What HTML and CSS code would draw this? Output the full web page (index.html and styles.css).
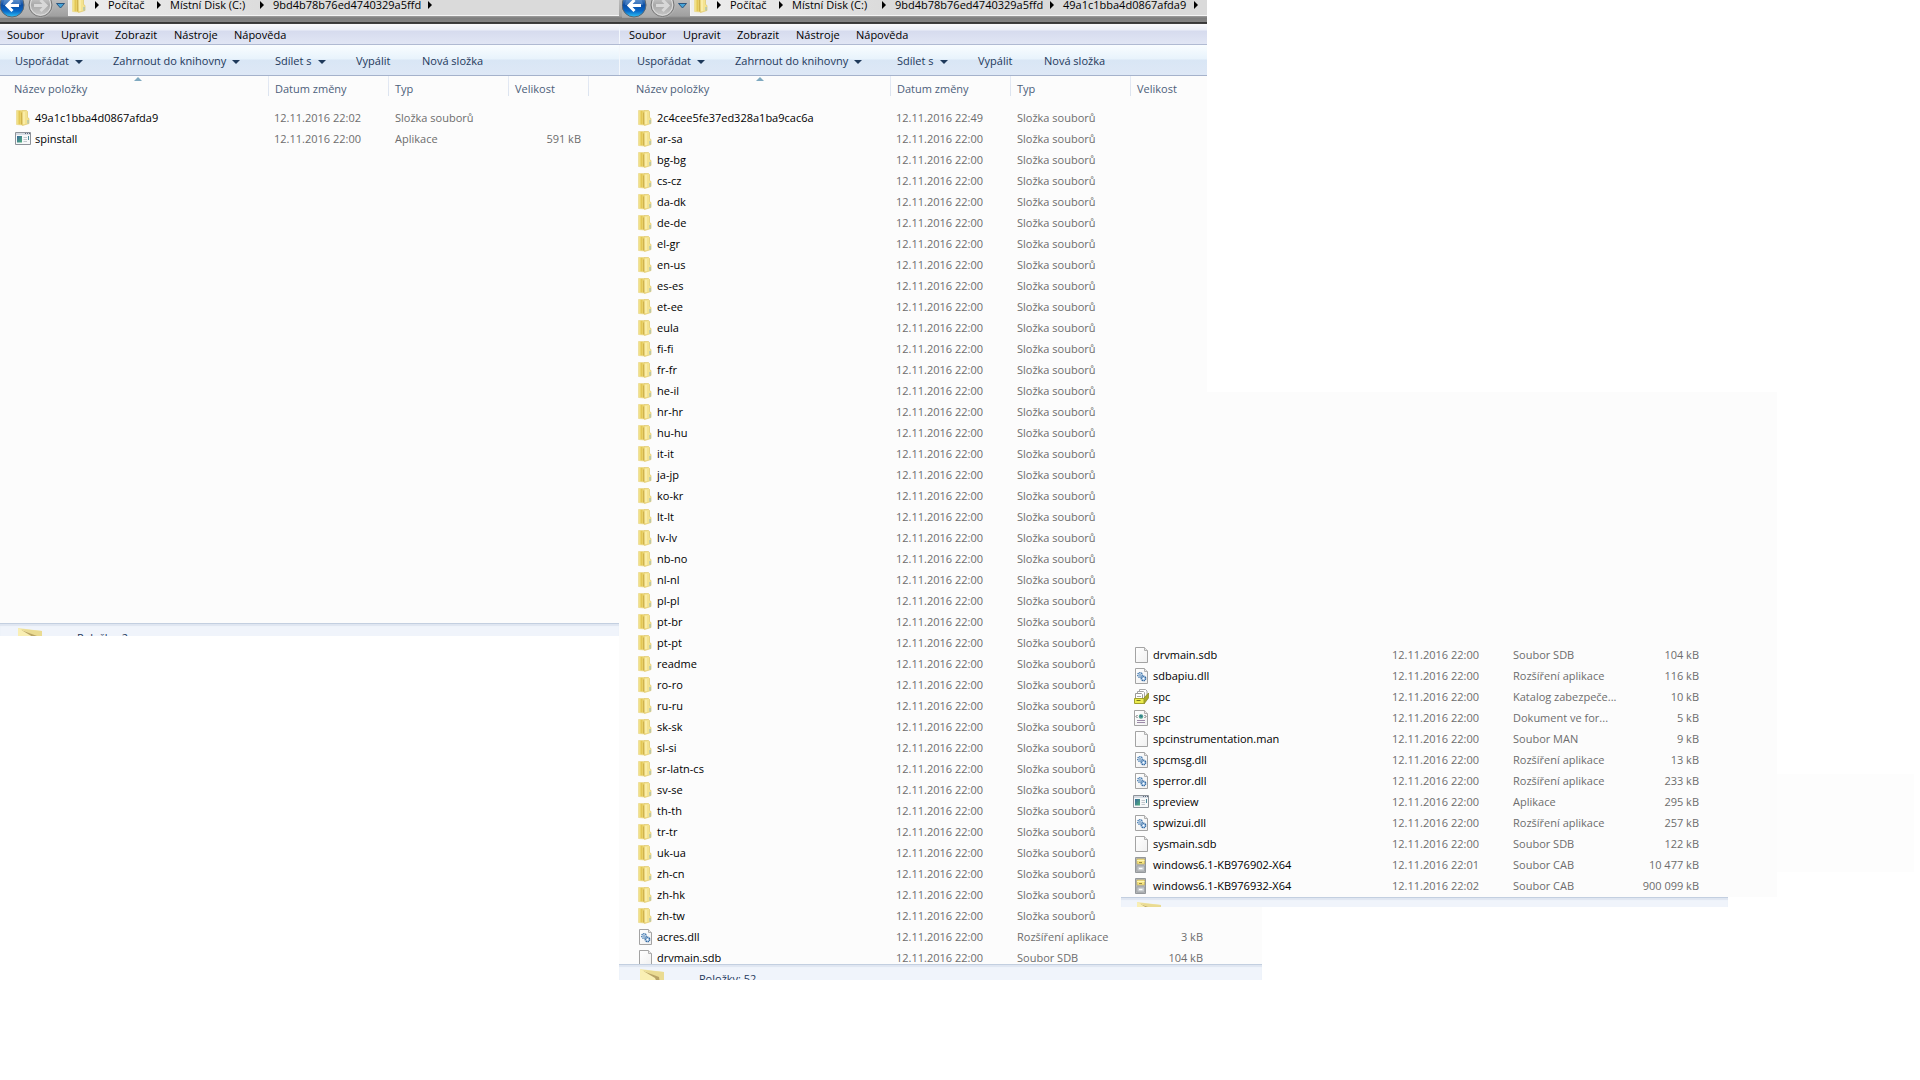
FILE: index.html
```html
<!DOCTYPE html>
<html lang="cs">
<head>
<meta charset="utf-8">
<title>Místní Disk (C:)</title>
<link rel="stylesheet" href="styles.css">
</head>
<body>
<svg class="sprites" aria-hidden="true">
  <defs>
    <linearGradient id="gold" x1="0" x2="1" y1="0" y2="0"><stop offset="0" stop-color="#f8eda0"/><stop offset=".5" stop-color="#e3c755"/><stop offset="1" stop-color="#f3e38d"/></linearGradient>
    <linearGradient id="blue" x1="0" x2="0" y1="0" y2="1"><stop offset="0" stop-color="#8fb8e2"/><stop offset=".5" stop-color="#0c4da3"/><stop offset=".75" stop-color="#0868c8"/><stop offset="1" stop-color="#2fc3f5"/></linearGradient>
    <linearGradient id="steel" x1="0" x2="0" y1="0" y2="1"><stop offset="0" stop-color="#d6d6d6"/><stop offset=".5" stop-color="#a9a9a9"/><stop offset="1" stop-color="#c8c8c8"/></linearGradient>
    <linearGradient id="paper" x1="0" x2="1" y1="0" y2="1"><stop offset="0" stop-color="#fff"/><stop offset="1" stop-color="#f0f0f0"/></linearGradient>
    <linearGradient id="teal" x1="0" x2="1" y1="0" y2="1"><stop offset="0" stop-color="#3a6a9a"/><stop offset="1" stop-color="#4fae7d"/></linearGradient>
  </defs>
  <symbol id="folder" viewBox="0 0 16 16">
    <path d="M1.5 .5h5l1 1V15l-6-.5z" fill="url(#gold)" stroke="#e9d78a" stroke-width=".7"/>
    <path d="M7 .5h4.500l1 1v6l1.500 1v5L7.500 15.500z" fill="#f4e38f" stroke="#dfc76a" stroke-width=".7"/>
    <path d="M6.500 2.500v12" stroke="#d0b24c"/><path d="M9 2v12" stroke="#fff6c0"/><path d="M13 10v3.500" stroke="#8fb7c4"/>
  </symbol>
  <symbol id="page" viewBox="0 0 16 16">
    <path d="M2.500.5h9l3 3v12h-12z" fill="url(#paper)" stroke="#a3a3a3"/><path d="M11.500.5v3h3" fill="#e8e8e8" stroke="#b0b0b0"/>
  </symbol>
  <symbol id="dll" viewBox="0 0 16 16">
    <use href="#page"/>
    <circle cx="7" cy="7" r="2.300" fill="#d7e8f7" stroke="#467aae" stroke-width="1.400" stroke-dasharray="1.200 .6"/><circle cx="7" cy="7" r=".7" fill="#2d5c91"/>
    <circle cx="10.500" cy="10.500" r="2.200" fill="#b9d4ee" stroke="#2f66a0" stroke-width="1.400" stroke-dasharray="1.200 .6"/><circle cx="10.500" cy="10.500" r=".7" fill="#fff"/>
  </symbol>
  <symbol id="app" viewBox="0 0 16 16">
    <path d="M.5 1.500h15v12H.5z" fill="#f7f8f9" stroke="#8d9299"/><path d="M1 2h14v2H1z" fill="#d7dce3"/><path d="M10 2.500h1m1 0h1m1 0h1" stroke="#58677c"/>
    <path d="M2 5h5v6.500H2z" fill="url(#teal)"/><path d="M8.500 6.500H12M8.500 8.500H12M8.500 10.500H12" stroke="#c2c7cd"/><path d="M13.500 5v4" stroke="#4a8a9a"/>
  </symbol>
  <symbol id="catalog" viewBox="0 0 16 16">
    <path d="M6.500.5h6l1.500 1.500v7h-7.500z" fill="#fff" stroke="#a7a7a7"/><path d="M4.500 2.500h6l1 1v7h-7z" fill="#fff" stroke="#a7a7a7"/><path d="M2.500 4.500h6l1 1v6h-7z" fill="#fff" stroke="#999"/>
    <path d="M4 7.500h4" stroke="#aaa"/><path d="M10.500 9.500L15.500 4v5l-4.500 6z" fill="#a9a927" stroke="#85851d" stroke-width=".7"/>
    <path d="M1.500 9.500h9.500v5H1.500z" fill="#ecec4f" stroke="#a0a02b"/><path d="M3.500 11.500h4" stroke="#77771d"/>
  </symbol>
  <symbol id="xml" viewBox="0 0 16 16">
    <path d="M1.500.5h10l3 3v12h-13z" fill="url(#paper)" stroke="#a3a3a3"/><path d="M11.500.5v3h3" fill="#e8e8e8" stroke="#b0b0b0"/>
    <circle cx="8" cy="6.500" r="2.200" fill="#4aa08e"/><path d="M7 5.500l2 1" stroke="#245f91"/><path d="M4.500 5L3 6.500 4.500 8M11.500 5L13 6.500 11.500 8" fill="none" stroke="#666"/>
    <path d="M4 10.500h8M4 12.500h8" stroke="#9c8aa9"/>
  </symbol>
  <symbol id="cabinet" viewBox="0 0 16 16">
    <path d="M2.500.5h10v15h-10z" fill="#b4b7b9" stroke="#94989b"/><path d="M4 2h7.500v5H4z" fill="#f6e582" stroke="#c4ad50" stroke-width=".6"/><path d="M4 3.500h7.500" stroke="#fff7b5"/><path d="M6 5.500h3" stroke="#9a8b45"/>
    <path d="M4 9h7.500v5H4z" fill="#c6cacc" stroke="#95999c" stroke-width=".6"/><path d="M6 11.500h3.500" stroke="#fff" stroke-width="1.400"/>
  </symbol>
  <symbol id="nav" viewBox="0 0 68 23">
    <rect x="-14" y="-10" width="68" height="28" rx="14" fill="#b9b9b9" opacity=".5"/>
    <circle cx="12" cy="5" r="12" fill="url(#blue)" stroke="#5b6670"/><path d="M3 5a9 9 0 0 1 18 0" fill="#7fb0e2" opacity=".35"/>
    <path d="M19 5.500H8M12.500 0L7 5.500 12.500 11" fill="none" stroke="#fff" stroke-width="3"/>
    <circle cx="40.500" cy="5" r="11.500" fill="url(#steel)" stroke="#777"/><circle cx="40.500" cy="5" r="10.200" fill="none" stroke="#dedede"/>
    <path d="M34 5.500h11M40.500 0l5.500 5.500-5.500 5.500" fill="none" stroke="#d8d8d8" stroke-width="3"/>
    <path d="M56.500 3.500h8l-4 4.500z" fill="#45a5d9" stroke="#2b5680"/>
  </symbol>
  <symbol id="bigfolder" viewBox="0 0 28 16">
    <path d="M2 0l24 3v13H2z" fill="#f3e8a8"/><path d="M5 1l16 8v7h5V3z" fill="#eadb92"/><path d="M5 2l16 6 1 8z" fill="#b9a466"/><path d="M2 0l15 9 3 7H2z" fill="#f9efb4"/>
  </symbol>
</svg>

<main class="desktop">
  <section class="window first">
    <header class="chrome">
      <div class="titlebar">
        <svg class="nav"><use href="#nav"/></svg>
        <nav class="address"><svg class="icon"><use href="#folder"/></svg>
          <a class="crumb pc" href="#">Počítač</a><a class="crumb disk" href="#">Místní Disk (C:)</a><a class="crumb dir" href="#">9bd4b78b76ed4740329a5ffd</a><i class="next"></i></nav>
      </div>
      <div class="menubar"><button>Soubor</button><button>Upravit</button><button>Zobrazit</button><button>Nástroje</button><button>Nápověda</button></div>
      <div class="toolbar"><button class="drop">Uspořádat</button><button class="drop">Zahrnout do knihovny</button><button class="drop">Sdílet s</button><button>Vypálit</button><button>Nová složka</button></div>
    </header>
    <div class="list">
      <table><colgroup><col class="c-name"><col class="c-date"><col class="c-type"><col class="c-size"></colgroup>
        <thead><tr><th class="sorted">Název položky</th><th>Datum změny</th><th>Typ</th><th>Velikost</th></tr></thead>
        <tbody id="files-first"></tbody></table>
    </div>
    <footer class="status"><svg class="thumb"><use href="#bigfolder"/></svg><span>Položky: 2</span></footer>
  </section>

  <section class="window second">
    <header class="chrome">
      <div class="titlebar">
        <svg class="nav"><use href="#nav"/></svg>
        <nav class="address"><svg class="icon"><use href="#folder"/></svg>
          <a class="crumb pc" href="#">Počítač</a><a class="crumb disk" href="#">Místní Disk (C:)</a><a class="crumb dir" href="#">9bd4b78b76ed4740329a5ffd</a><a class="crumb sub" href="#">49a1c1bba4d0867afda9</a><i class="next"></i></nav>
      </div>
      <div class="menubar"><button>Soubor</button><button>Upravit</button><button>Zobrazit</button><button>Nástroje</button><button>Nápověda</button></div>
      <div class="toolbar"><button class="drop">Uspořádat</button><button class="drop">Zahrnout do knihovny</button><button class="drop">Sdílet s</button><button>Vypálit</button><button>Nová složka</button></div>
    </header>
    <div class="list">
      <table><colgroup><col class="c-name"><col class="c-date"><col class="c-type"><col class="c-size"></colgroup>
        <thead><tr><th class="sorted">Název položky</th><th>Datum změny</th><th>Typ</th><th>Velikost</th></tr></thead>
        <tbody id="files-second"></tbody></table>
    </div>
    <footer class="status"><svg class="thumb"><use href="#bigfolder"/></svg><span>Položky: 52</span></footer>
  </section>

  <section class="window third">
    <div class="list">
      <table><colgroup><col class="c-name"><col class="c-date"><col class="c-type"><col class="c-size"></colgroup>
        <tbody id="files-third"></tbody></table>
    </div>
    <footer class="status"><svg class="thumb"><use href="#bigfolder"/></svg></footer>
  </section>
  <div class="margin-pane"></div>
</main>
<script src="script.js"></script>
</body>
</html>
```
FILE: styles.css
```css
* { box-sizing: border-box; }

body {
  margin: 0;
  background: #fff;
  font: 11px/21px "Open Sans", "Noto Sans", sans-serif;
  color: #000;
}

button { border: 0; padding: 0; background: none; font: inherit; color: inherit; text-align: left; white-space: nowrap; }
a { color: inherit; text-decoration: none; }
.sprites { position: absolute; width: 0; height: 0; }

.desktop {
  display: grid;
  grid-template-columns: 619fr 499fr 144fr 515fr 137fr 6fr;
  grid-template-rows: auto;
  align-items: start;
  overflow: hidden;
}
.window { grid-row: 1; min-width: 0; display: flex; flex-direction: column; }
.first { grid-column: 1; }
.second {
  grid-column: 2 / 4;
  background: linear-gradient(#fff, #fff) top right / 55px 392px no-repeat #fcfcfc;
}
.third { grid-column: 3 / 5; margin-top: 392px; z-index: 1; }
.margin-pane { grid-row: 1; grid-column: 5; height: 98px; margin-top: 774px; background: #fdfdfd; }

/* Window frame */
.second .chrome { margin-right: 55px; }
.second .menubar { padding-left: 10px; }
.second .toolbar { padding-left: 18px; }
.second .menubar, .second .toolbar { box-shadow: inset 1px 0 #f3f7fc; }
.second .titlebar { padding-left: 3px; }
.titlebar {
  display: flex;
  height: 24px;
  overflow: hidden;
  background: linear-gradient(#bcbcbc, #a0a0a0 16px, #7d7d7d 18px, #858585 22px, #333 22px, #444 24px);
}
.nav { flex: none; width: 68px; height: 23px; }
.address {
  flex: 1;
  display: flex;
  align-items: center;
  min-width: 0;
  height: 16px;
  padding: 0 0 6px 2px;
  border-left: 1px solid #f4f4f4;
  border-bottom: 1px solid #f4f4f4;
  background: linear-gradient(90deg, #eee, #dadada 40%);
}
.icon { flex: none; width: 16px; height: 16px; }
.address .icon { margin-right: 8px; }
.crumb { display: flex; align-items: center; flex: none; line-height: 16px; }
.crumb::before, .next { content: ""; flex: none; border: 4px solid transparent; border-left-color: #000; border-right: 0; }
.crumb::before { margin-right: 9px; }
.pc { width: 62px; }
.disk { width: 103px; }
.dir { width: 168px; }
.sub { width: 144px; }

.menubar {
  display: grid;
  grid-template-columns: 54px 54px 59px 60px auto;
  height: 21px;
  padding-left: 7px;
  background: linear-gradient(#fbfbfd, #eceff8 6px, #d6dbee 7px, #e1e6f4);
  border-bottom: 1px solid #b0bad2;
}
.toolbar {
  display: grid;
  grid-template-columns: 98px 162px 81px 66px auto;
  height: 31px;
  padding-left: 15px;
  background: linear-gradient(#f9fdff, #e8f3fc 14px, #d9e6f5 15px, #dee8f6);
  border-bottom: 1px solid #a5b2cb;
  color: #1e395b;
}
.drop::after { content: ""; display: inline-block; margin-left: 6px; vertical-align: 1px; border: 4px solid transparent; border-top-color: #1e395b; border-bottom: 0; }

/* File list */
.list { overflow: hidden; background: #fcfcfc; }
.second .list { padding-left: 3px; margin-right: 55px; background: none; }
.first .list { min-height: 547px; }
.third .list { padding: 252px 0 1px; }
table { width: 589px; table-layout: fixed; border-collapse: collapse; }
.c-name { width: 269px; }
.c-date, .c-type { width: 120px; }
.c-size { width: 80px; }
th, td { padding: 0; white-space: nowrap; font-weight: 400; text-align: left; }
th {
  height: 31px;
  padding: 0 0 7px 6px;
  color: #4c607a;
  background: linear-gradient(#e6ebf5, #dbe3ef) top right / 1px 20px no-repeat;
}
th.sorted { position: relative; padding-left: 14px; }
th.sorted::after { content: ""; position: absolute; top: 1px; left: 134px; border: 4px solid transparent; border-top: 0; border-bottom-color: #7fa9c0; }
td { height: 21px; padding-left: 5px; color: #6d6d6d; }
td.type { padding-left: 6px; }
td.name { padding-left: 15px; color: #000; }
.file { display: flex; align-items: center; gap: 4px; }
td.size { padding: 0 8px 0 0; text-align: right; }

/* Details pane */
.status {
  display: flex;
  gap: 33px;
  padding-left: 16px;
  height: 13px;
  overflow: hidden;
  background: #f0f4fb;
  border-top: 1px solid #c3cfe0;
  box-shadow: inset 0 2px 1px #dfe6f1;
  color: #1e395b;
}
.status span { margin-top: 3px; }
.thumb { flex: none; width: 28px; height: 16px; margin-top: 4px; }
.second .status { position: relative; height: 16px; margin-top: -4px; padding-left: 19px; }
.third .status { height: 10px; margin: 0 49px 0 3px; padding-left: 14px; }
```
FILE: script.js
```
const DAY = "12.11.2016 ";
const folder = (name, time = "22:00") => ["folder", name, time, "Složka souborů", ""];

const first = [
  folder("49a1c1bba4d0867afda9", "22:02"),
  ["app", "spinstall", "22:00", "Aplikace", "591 kB"],
];

const languages = "ar-sa bg-bg cs-cz da-dk de-de el-gr en-us es-es et-ee eula fi-fi fr-fr he-il hr-hr hu-hu it-it ja-jp ko-kr lt-lt lv-lv nb-no nl-nl pl-pl pt-br pt-pt readme ro-ro ru-ru sk-sk sl-si sr-latn-cs sv-se th-th tr-tr uk-ua zh-cn zh-hk zh-tw";
const second = [
  folder("2c4cee5fe37ed328a1ba9cac6a", "22:49"),
  ...languages.split(" ").map((name) => folder(name)),
  ["dll", "acres.dll", "22:00", "Rozšíření aplikace", "3 kB"],
  ["page", "drvmain.sdb", "22:00", "Soubor SDB", "104 kB"],
];

const third = [
  ["page", "drvmain.sdb", "22:00", "Soubor SDB", "104 kB"],
  ["dll", "sdbapiu.dll", "22:00", "Rozšíření aplikace", "116 kB"],
  ["catalog", "spc", "22:00", "Katalog zabezpeče...", "10 kB"],
  ["xml", "spc", "22:00", "Dokument ve for...", "5 kB"],
  ["page", "spcinstrumentation.man", "22:00", "Soubor MAN", "9 kB"],
  ["dll", "spcmsg.dll", "22:00", "Rozšíření aplikace", "13 kB"],
  ["dll", "sperror.dll", "22:00", "Rozšíření aplikace", "233 kB"],
  ["app", "spreview", "22:00", "Aplikace", "295 kB"],
  ["dll", "spwizui.dll", "22:00", "Rozšíření aplikace", "257 kB"],
  ["page", "sysmain.sdb", "22:00", "Soubor SDB", "122 kB"],
  ["cabinet", "windows6.1-KB976902-X64", "22:01", "Soubor CAB", "10 477 kB"],
  ["cabinet", "windows6.1-KB976932-X64", "22:02", "Soubor CAB", "900 099 kB"],
];

function fill(id, files) {
  document.getElementById(id).innerHTML = files.map(([icon, name, time, type, size]) =>
    `<tr><td class="name"><div class="file"><svg class="icon"><use href="#${icon}"/></svg><span>${name}</span></div></td>` +
    `<td>${DAY}${time}</td><td class="type">${type}</td><td class="size">${size}</td></tr>`).join("");
}

fill("files-first", first);
fill("files-second", second);
fill("files-third", third);
```
